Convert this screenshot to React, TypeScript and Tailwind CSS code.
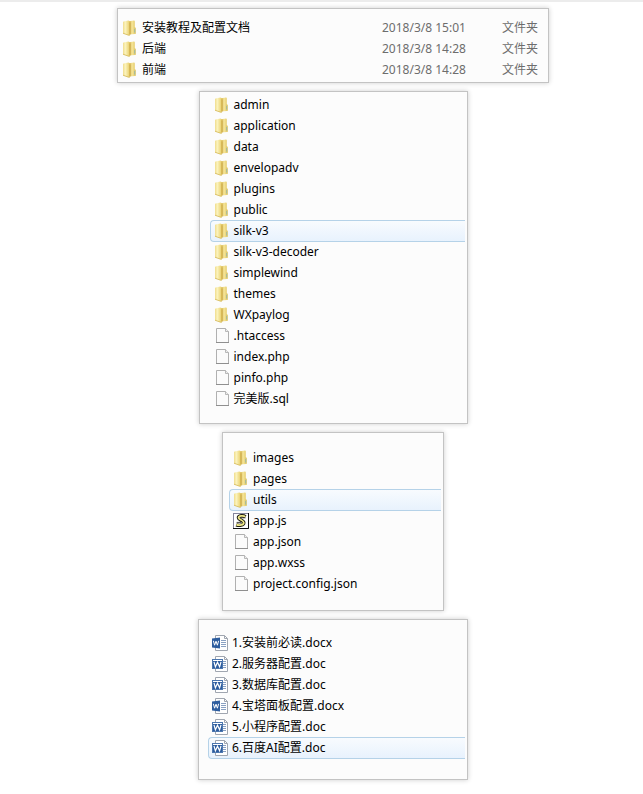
type IconKind = 'folder' | 'file' | 'script' | 'docx' | 'doc'

type Item = {
  name: string
  icon: IconKind
  selected?: boolean
}

const toItems = (icon: IconKind, names: string[]): Item[] => names.map((name) => ({ name, icon }))

const archive = [
  { name: '安装教程及配置文档', date: '2018/3/8 15:01', type: '文件夹' },
  { name: '后端', date: '2018/3/8 14:28', type: '文件夹' },
  { name: '前端', date: '2018/3/8 14:28', type: '文件夹' },
]

const backend: Item[] = [
  ...toItems('folder', ['admin', 'application', 'data', 'envelopadv', 'plugins', 'public']),
  { name: 'silk-v3', icon: 'folder', selected: true },
  ...toItems('folder', ['silk-v3-decoder', 'simplewind', 'themes', 'WXpaylog']),
  ...toItems('file', ['.htaccess', 'index.php', 'pinfo.php', '完美版.sql']),
]

const frontend: Item[] = [
  ...toItems('folder', ['images', 'pages']),
  { name: 'utils', icon: 'folder', selected: true },
  { name: 'app.js', icon: 'script' },
  ...toItems('file', ['app.json', 'app.wxss', 'project.config.json']),
]

const docs: Item[] = [
  { name: '1.安装前必读.docx', icon: 'docx' },
  { name: '2.服务器配置.doc', icon: 'doc' },
  { name: '3.数据库配置.doc', icon: 'doc' },
  { name: '4.宝塔面板配置.docx', icon: 'docx' },
  { name: '5.小程序配置.doc', icon: 'doc' },
  { name: '6.百度AI配置.doc', icon: 'doc', selected: true },
]

function FolderIcon() {
  return (
    <svg viewBox="0 0 16 16" className="size-4 shrink-0" aria-hidden="true">
      <defs>
        <linearGradient id="folder-front" x1="0" x2="1">
          <stop offset="0" stopColor="#f0dc8c" />
          <stop offset="0.35" stopColor="#fbf3bd" />
          <stop offset="1" stopColor="#e8cd66" />
        </linearGradient>
        <linearGradient id="folder-back" x1="0" x2="1">
          <stop offset="0" stopColor="#cfab43" />
          <stop offset="0.45" stopColor="#f6e69a" />
          <stop offset="1" stopColor="#dfc35e" />
        </linearGradient>
      </defs>
      <path d="M7 1.2L12 0.6Q12.8 0.6 12.8 1.4V7L13.8 8V13.2Q13.8 14 13 14.1L7 14.6Z" fill="url(#folder-back)" />
      <path d="M1.6 1.4L6.4 0.6Q7.8 0.8 7.8 2V15.4L6.2 15.2L1.6 13.8Q1 13.6 1 12.9V2Q1 1.5 1.6 1.4Z" fill="url(#folder-front)" />
      <path d="M1 13.2L6.2 15.1L7.6 15.3" fill="none" stroke="#cfb04c" strokeWidth="0.7" />
      <path d="M8 2.4V14.6" stroke="#bd9a38" strokeWidth="0.7" />
      <path d="M12.7 8.8V12.6" stroke="#93b7a6" strokeWidth="0.9" />
    </svg>
  )
}

function FileIcon() {
  return (
    <svg viewBox="0 0 16 16" className="size-4 shrink-0" aria-hidden="true">
      <path d="M2.5 0.5H11.5L14.5 3.5V14.5H2.5Z" fill="#fbfbfb" stroke="#b0b0b0" />
      <path d="M2 14.5H15" stroke="#8f8f8f" />
      <path d="M11.5 0.5V3.5H14.5" fill="#eeeeee" stroke="#a8a8a8" strokeWidth="0.8" />
    </svg>
  )
}

function ScriptIcon() {
  return (
    <svg viewBox="0 0 16 16" className="size-4 shrink-0" aria-hidden="true">
      <rect x="0.5" y="0.5" width="15" height="15" fill="#fff" stroke="#85859a" />
      <path d="M0 15.5H15.5V0" fill="none" stroke="#111" />
      <path d="M12.4 3.8C10.6 2.2 5.4 2.4 5.4 4.8C5.4 7 10.8 7.2 10.8 9.8C10.8 12.4 6 12.8 3.2 11.8" fill="none" stroke="#1c1c10" strokeWidth="3.4" />
      <path d="M12.2 3.7C10.4 2.4 5.6 2.6 5.6 4.8C5.6 7 10.8 7.2 10.8 9.8C10.8 12.2 6 12.6 3.4 11.7" fill="none" stroke="#f0e888" strokeWidth="1.8" />
      <path d="M8 4.8H12.6M3.6 9.4H8.4M6.2 7.6L9 9" stroke="#1c1c10" strokeWidth="0.8" />
    </svg>
  )
}

function WordIcon({ legacy }: { legacy?: boolean }) {
  return (
    <svg viewBox="0 0 16 16" className="size-4 shrink-0" aria-hidden="true">
      <path d="M3.5 0.5H12.5L15.5 3.5V15.5H3.5Z" fill="#fff" stroke="#a0a6b0" />
      <path d="M12.5 0.5V3.5H15.5" fill="none" stroke="#a0a6b0" />
      <path d="M9 5.5H14M9 7.5H14M9 9.5H14M9 11.5H14" stroke="#8aa1c2" />
      {legacy ? (
        <>
          <rect x="0.5" y="3.5" width="10" height="9" fill="#fff" stroke="#4c76ae" />
          <rect x="1" y="5" width="9" height="7" fill="#2c5c9e" />
          <path d="M2 5.8L3.4 10.8L5.5 6.2L7.6 10.8L9 5.8" fill="none" stroke="#fff" strokeWidth="1.2" />
        </>
      ) : (
        <>
          <path d="M0 3.4L8 2.4V13.6L0 12.6Z" fill="#2c5c9e" />
          <path d="M1.4 5.8L2.6 10.2L4 6.2L5.4 10.2L6.6 5.8" fill="none" stroke="#fff" />
        </>
      )}
    </svg>
  )
}

function ItemIcon({ kind }: { kind: IconKind }) {
  if (kind === 'folder') return <FolderIcon />
  if (kind === 'file') return <FileIcon />
  if (kind === 'script') return <ScriptIcon />
  return <WordIcon legacy={kind === 'doc'} />
}

const panel = 'max-w-full border border-[#c3c3c3] bg-[#fcfcfc] shadow-[0_0_5px_rgba(0,0,0,0.2)]'

function FileList({ items, label, className }: { items: Item[]; label: string; className: string }) {
  return (
    <ul aria-label={label} className={`${panel} ${className}`}>
      {items.map((item) => (
        <li
          key={item.name}
          className={
            item.selected
              ? '-mb-px flex h-[22px] items-center gap-1 rounded-l-sm border border-r-0 border-[#b5d2e8] bg-linear-to-b from-[#f8fbfe] to-[#e8f2fd] pl-[3px]'
              : 'flex h-[21px] items-center gap-1 pl-1'
          }
        >
          <ItemIcon kind={item.icon} />
          <span className="whitespace-nowrap">{item.name}</span>
        </li>
      ))}
    </ul>
  )
}

export default function App() {
  return (
    <main className="flex flex-col items-center gap-2 border-t-2 border-[#ececec] bg-white pt-[6px] pb-[14px] pl-[23px] font-['Noto_Sans','Noto_Sans_CJK_SC',sans-serif] text-[12px] leading-5 text-black">
      <div className={`${panel} w-[432px] pt-2 pb-[2px]`}>
        <table className="w-full table-fixed">
          <tbody>
            {archive.map((row) => (
              <tr key={row.name} className="h-[21px] whitespace-nowrap text-[#6d6d6d]">
                <td className="p-0 pl-1 text-black">
                  <div className="flex items-center gap-1">
                    <FolderIcon />
                    <span>{row.name}</span>
                  </div>
                </td>
                <td className="w-[120px] p-0">{row.date}</td>
                <td className="w-[46px] p-0">{row.type}</td>
              </tr>
            ))}
          </tbody>
        </table>
      </div>
      <FileList items={backend} label="后端" className="w-[269px] pt-[2px] pr-[2px] pb-[14px] pl-[10px]" />
      <FileList items={frontend} label="前端" className="w-[222px] pt-[14px] pr-[2px] pb-4 pl-[6px]" />
      <FileList items={docs} label="安装教程及配置文档" className="w-[270px] pt-3 pr-[2px] pb-[21px] pl-[9px]" />
    </main>
  )
}
